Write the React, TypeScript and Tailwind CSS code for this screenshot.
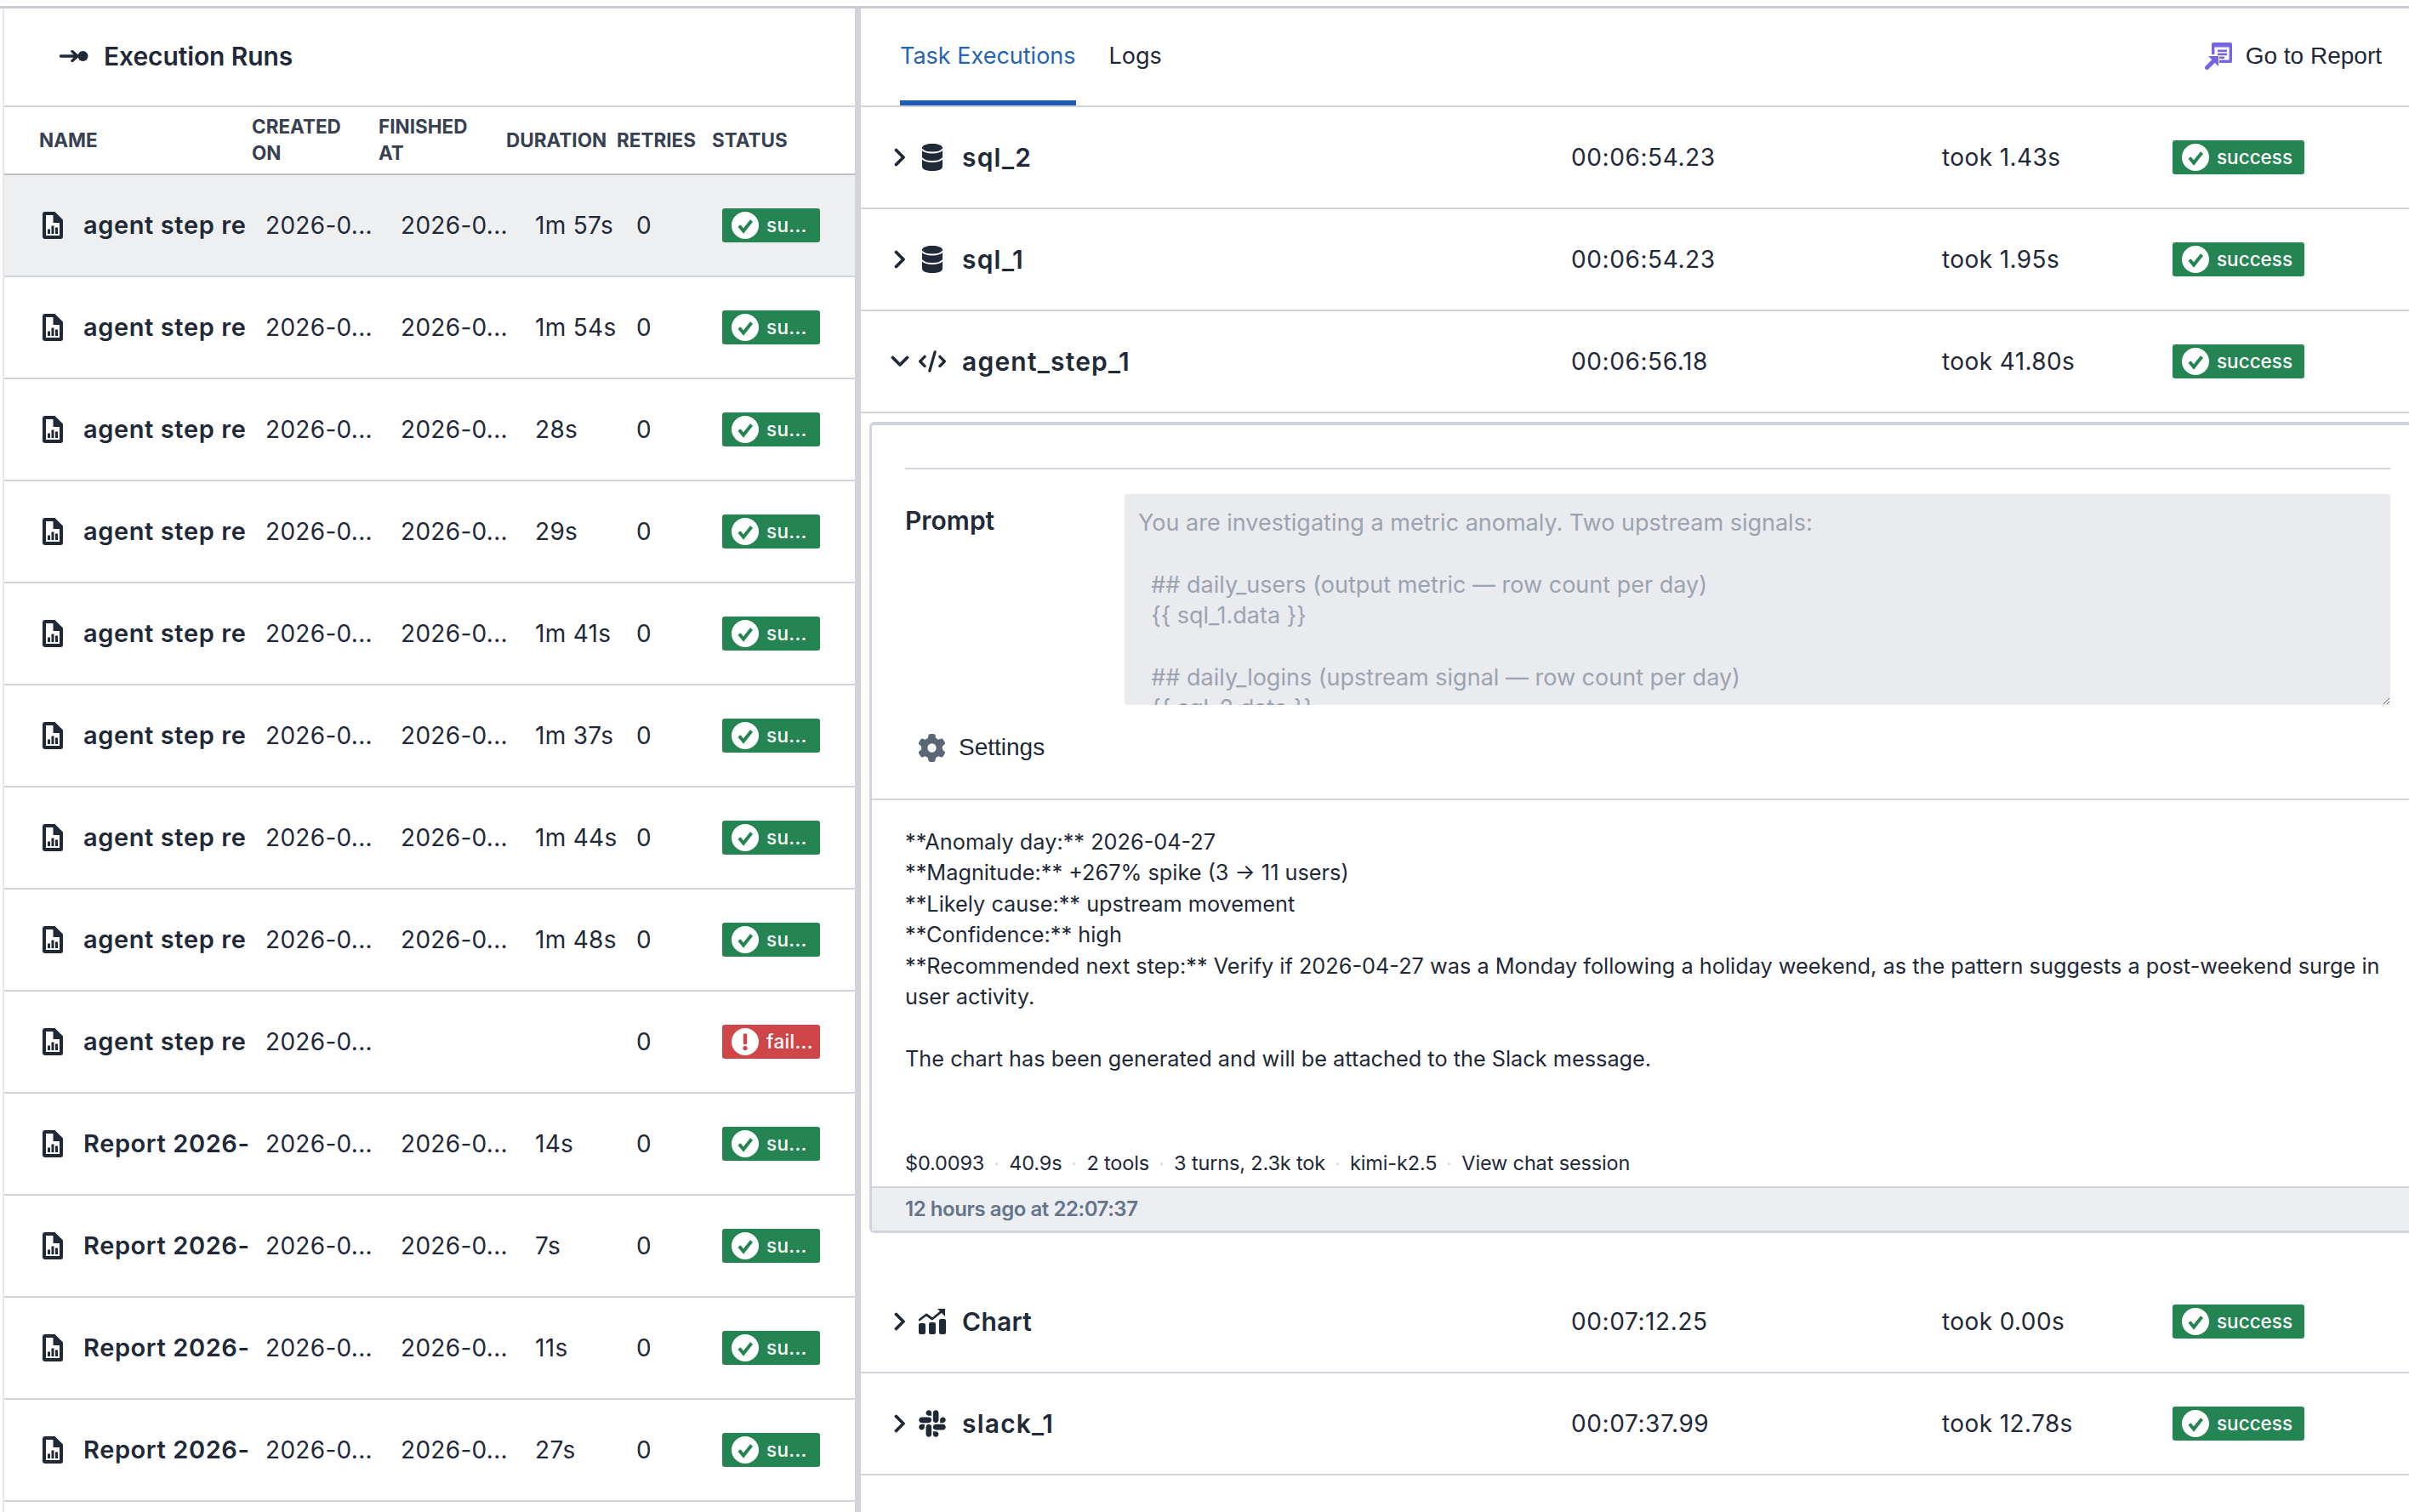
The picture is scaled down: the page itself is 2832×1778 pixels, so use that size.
import React from "react";
import { FaCode, FaGear, FaSlack } from "react-icons/fa6";

const FileChart = () => (
  <svg viewBox="0 0 24 32" className="w-[24px] h-[32px] shrink-0">
    <path d="M3 0H14.5L24 9.5V29a3 3 0 0 1-3 3H3a3 3 0 0 1-3-3V3a3 3 0 0 1 3-3Z" fill="#1f2937" />
    <path d="M4 4h8.5v9H20V28H4Z" fill="#fff" />
    <rect x="6" y="20.5" width="3" height="5.5" fill="#1f2937" />
    <rect x="10.5" y="16.5" width="3" height="9.5" fill="#1f2937" />
    <rect x="15" y="18.5" width="3" height="7.5" fill="#1f2937" />
  </svg>
);

const CheckDot = () => (
  <svg viewBox="0 0 32 32" className="w-[32px] h-[32px] shrink-0">
    <circle cx="16" cy="16" r="16" fill="#fff" />
    <path d="M9 16.5l5 6 9.5-12" fill="none" stroke="#258552" strokeWidth="4" />
  </svg>
);

const BangDot = () => (
  <svg viewBox="0 0 32 32" className="w-[32px] h-[32px] shrink-0">
    <circle cx="16" cy="16" r="16" fill="#fff" />
    <rect x="13.8" y="6.5" width="4.4" height="12.5" rx="1" fill="#cf4548" />
    <circle cx="16" cy="23.5" r="2.6" fill="#cf4548" />
  </svg>
);

const Badge = ({ fail, label, wide }: { fail?: boolean; label: string; wide?: boolean }) => (
  <div
    className={`flex items-center h-[40px] rounded-[3px] text-white pl-[11px] gap-[9px] font-medium text-[22.5px] ${
      wide ? "w-[155px]" : "w-[115px]"
    } ${fail ? "bg-[#cf4548]" : "bg-[#258552]"}`}
  >
    {fail ? <BangDot /> : <CheckDot />}
    <span>{label}</span>
  </div>
);

const runs: [string, string, string][] = [
  ["agent step re", "1m 57s", "s"],
  ["agent step re", "1m 54s", "s"],
  ["agent step re", "28s", "s"],
  ["agent step re", "29s", "s"],
  ["agent step re", "1m 41s", "s"],
  ["agent step re", "1m 37s", "s"],
  ["agent step re", "1m 44s", "s"],
  ["agent step re", "1m 48s", "s"],
  ["agent step re", "", "f"],
  ["Report 2026-", "14s", "s"],
  ["Report 2026-", "7s", "s"],
  ["Report 2026-", "11s", "s"],
  ["Report 2026-", "27s", "s"],
];

const Chev = ({ open }: { open?: boolean }) =>
  open ? (
    <svg viewBox="0 0 22 14" className="w-[22px] h-[14px]">
      <path d="M2.5 2.5 11 11l8.5-8.5" fill="none" stroke="#1f2937" strokeWidth="3.8" strokeLinecap="round" strokeLinejoin="round" />
    </svg>
  ) : (
    <svg viewBox="0 0 14 22" className="w-[14px] h-[22px]">
      <path d="M2.5 2.5 11 11l-8.5 8.5" fill="none" stroke="#1f2937" strokeWidth="3.8" strokeLinecap="round" strokeLinejoin="round" />
    </svg>
  );

const DbIcon = () => (
  <svg viewBox="0 0 24 32" className="w-[24px] h-[32px]">
    <path d="M0 5c0-3 5-5 12-5s12 2 12 5v22c0 3-5 5-12 5S0 30 0 27Z" fill="#1f2937" />
    <path d="M0 6.5c2 3 7 4 12 4s10-1 12-4M0 17c2 3 7 4 12 4s10-1 12-4" fill="none" stroke="#fff" strokeWidth="1.8" />
  </svg>
);

const ChartIcon = () => (
  <svg viewBox="0 0 32 30" className="w-[32px] h-[30px]" fill="#1f2937">
    <rect x="0" y="17" width="8" height="13" rx="2" />
    <rect x="12" y="16" width="8" height="14" rx="2" />
    <rect x="24" y="12" width="8" height="18" rx="2" />
    <path d="M1 13 L9 7 L16 12 L27 3" fill="none" stroke="#1f2937" strokeWidth="2.8" strokeLinecap="round" strokeLinejoin="round" />
    <path d="M22 0 H31 V9 Z" />
  </svg>
);

const TaskRow = ({ icon, name, time, took, open }: { icon: React.ReactNode; name: string; time: string; took: string; open?: boolean }) => (
  <div className="grid grid-cols-[835px_436px_271px_1fr] items-center h-[120px] border-b-2 border-[#d1d5db]">
    <div className="flex items-center">
      <div className="ml-[32px] w-[28px] flex justify-center shrink-0"><Chev open={open} /></div>
      <div className="ml-[8px] w-[32px] flex justify-center shrink-0 text-[#1f2937]">{icon}</div>
      <span className={`ml-[19px] text-[30px] font-semibold text-[#1f2937] ${name.includes("_") ? "tracking-[1.2px]" : "tracking-[0.3px]"}`}>{name}</span>
    </div>
    <div className="text-[28px] text-[#1f2937] tracking-[0.6px]">{time}</div>
    <div className="text-[28px] text-[#1f2937] tracking-[0.4px]">{took}</div>
    <Badge label="success" wide />
  </div>
);

const Prompt = `You are investigating a metric anomaly. Two upstream signals:

  ## daily_users (output metric — row count per day)
  {{ sql_1.data }}

  ## daily_logins (upstream signal — row count per day)
  {{ sql_2.data }}`;

const lines = [
  "**Anomaly day:** 2026-04-27",
  "**Magnitude:** +267% spike (3 → 11 users)",
  "**Likely cause:** upstream movement",
  "**Confidence:** high",
  "**Recommended next step:** Verify if 2026-04-27 was a Monday following a holiday weekend, as the pattern suggests a post-weekend surge in",
  "user activity.",
  " ",
  "The chart has been generated and will be attached to the Slack message.",
];

const meta = ["$0.0093", "40.9s", "2 tools", "3 turns, 2.3k tok", "kimi-k2.5", "View chat session"];

export default function App() {
  return (
    <div className="w-[2832px] h-[1778px] overflow-hidden bg-white flex flex-col font-['Inter',sans-serif] text-[#1f2937]">
      <div className="h-[10px] shrink-0 border-b-[3px] border-[#c9ccd0]" />
      <div className="flex flex-1 min-h-0">
        {/* left */}
        <div className="w-[1002px] ml-[3px] border-l-2 border-[#e5e7eb] shrink-0 flex flex-col">
          <div className="h-[116px] shrink-0 border-b-2 border-[#d1d5db] flex items-center pl-[65px] pb-[2px]">
            <svg viewBox="0 0 34 14" className="w-[34px] h-[14px]">
              <path d="M1.5 7H21M15 1.5 21 7l-6 5.5" fill="none" stroke="#1f2937" strokeWidth="3.4" strokeLinecap="round" strokeLinejoin="round" />
              <circle cx="27.5" cy="7" r="6" fill="#1f2937" />
            </svg>
            <span className="ml-[18px] text-[30px] font-semibold tracking-[-0.1px]">Execution Runs</span>
          </div>
          <div className="h-[80px] shrink-0 border-b-2 border-[#bdbfc3] grid grid-cols-[291px_149px_150px_130px_112px_1fr] items-center pb-[2px] text-[22.5px] font-bold leading-[31px] text-[#374151]">
            <div className="pl-[41px]">NAME</div>
            <div>CREATED<br />ON</div>
            <div>FINISHED<br />AT</div>
            <div>DURATION</div>
            <div>RETRIES</div>
            <div>STATUS</div>
          </div>
          {runs.map(([n, d, s], i) => (
            <div
              key={i}
              className={`h-[120px] shrink-0 border-b-2 border-[#d1d5db] grid grid-cols-[307px_159px_158px_119px_101px_1fr] items-center text-[28px] tracking-[0.3px] ${i === 0 ? "bg-[#eeeff1]" : "bg-white"}`}
            >
              <div className="flex items-center pl-[45px]">
                <FileChart />
                <span className="ml-[24px] font-semibold text-[29px] tracking-[0.6px] whitespace-nowrap">{n}</span>
              </div>
              <div>2026-0...</div>
              <div>{s === "f" ? "" : "2026-0..."}</div>
              <div>{d}</div>
              <div>0</div>
              <Badge fail={s === "f"} label={s === "f" ? "fail..." : "su..."} />
            </div>
          ))}
        </div>
        {/* splitter */}
        <div className="w-[7px] shrink-0 bg-[#d1d5db]" />
        {/* right */}
        <div className="flex-1 min-w-0 flex flex-col">
          <div className="h-[116px] shrink-0 border-b-2 border-[#d1d5db] flex items-stretch pl-[46px] pr-[32px] text-[27px]">
            <div className="relative flex items-center pb-[2px] text-[#2563b8]">
              Task Executions
              <div className="absolute left-0 right-0 bottom-0 h-[6px] bg-[#1e5bb5]" />
            </div>
            <div className="ml-[39px] flex items-center pb-[2px]">Logs</div>
            <div className="ml-auto flex items-center pb-[2px] font-['Liberation_Sans',sans-serif] text-[28px] text-[#1f2937]">
              <svg viewBox="0 0 32 32" className="w-[32px] h-[32px]">
                <path d="M8 2a2 2 0 0 1 2-2h20a2 2 0 0 1 2 2v20a2 2 0 0 1-2 2H17v-3.4h11.6V5.5H11.4V14H8Z" fill="#7864e0" />
                <rect x="15" y="8.5" width="11" height="2.6" fill="#7864e0" />
                <rect x="15" y="12.5" width="11" height="2.6" fill="#7864e0" />
                <rect x="17" y="16.5" width="6" height="2.6" fill="#7864e0" />
                <path d="M2.5 29.5 10 22" stroke="#7864e0" strokeWidth="5" strokeLinecap="round" fill="none" />
                <path d="M4 16 H16 V28 Z" fill="#7864e0" />
              </svg>
              <span className="ml-[16px]">Go to Report</span>
            </div>
          </div>
          <TaskRow icon={<DbIcon />} name="sql_2" time="00:06:54.23" took="took 1.43s" />
          <TaskRow icon={<DbIcon />} name="sql_1" time="00:06:54.23" took="took 1.95s" />
          <TaskRow icon={<FaCode className="text-[32px]" />} name="agent_step_1" time="00:06:56.18" took="took 41.80s" open />
          <div className="ml-[10px] mt-[10px] border-t-4 border-l-[3px] border-b-[3px] border-[#d1d5db] rounded-l-[6px] shrink-0">
            <div className="pl-[39px] pr-[22px] pt-[50px]">
              <div className="border-t-2 border-[#d1d5db]" />
              <div className="flex mt-[29px]">
                <div className="w-[258px] shrink-0 pt-[13px] text-[30px] font-semibold leading-[36px]">Prompt</div>
                <textarea
                  readOnly
                  value={Prompt}
                  className="flex-1 h-[248px] bg-[#e9ebef] rounded-[3px] px-[16px] py-[16px] text-[27px] leading-[36.4px] text-[#9ca3af] overflow-hidden resize-y outline-none"
                />
              </div>
              <div className="h-[110px] flex items-center pl-[15px] pb-[10px]">
                <FaGear className="text-[#5b6676] text-[33px]" />
                <span className="ml-[15px] font-['Liberation_Sans',sans-serif] text-[28px] text-[#1f2937]">Settings</span>
              </div>
            </div>
            <div className="border-t-2 border-[#d1d5db] pt-[31px] pl-[39px] h-[456px] text-[25.3px] leading-[36.4px] whitespace-pre text-[#1f2937]">
              {lines.map((l, i) => (
                <div key={i}>{l}</div>
              ))}
              <div className="flex items-center mt-[87px] text-[23.5px] leading-[36px] tracking-[-0.15px]">
                {meta.map((m, i) => (
                  <React.Fragment key={i}>
                    {i > 0 && <span className="mx-[13px] w-[3px] h-[3px] rounded-full bg-[#d1d5db]" />}
                    <span>{m}</span>
                  </React.Fragment>
                ))}
              </div>
            </div>
            <div className="h-[52px] border-t-2 border-[#d1d5db] bg-[#eceef1] flex items-center pl-[39px] text-[24px] font-semibold text-[#64748b] tracking-[-0.45px]">
              12 hours ago at 22:07:37
            </div>
          </div>
          <div className="mt-[45px]">
            <TaskRow icon={<ChartIcon />} name="Chart" time="00:07:12.25" took="took 0.00s" />
          </div>
          <TaskRow icon={<FaSlack className="text-[36px]" />} name="slack_1" time="00:07:37.99" took="took 12.78s" />
        </div>
      </div>
    </div>
  );
}
